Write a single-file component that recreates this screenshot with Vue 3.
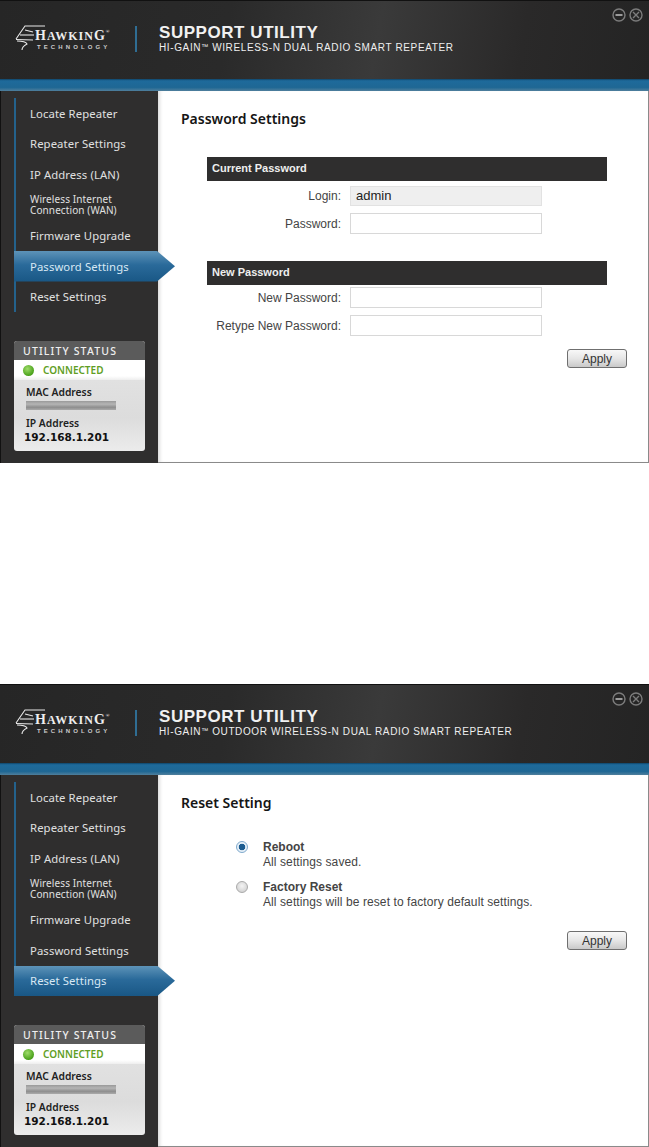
<script setup>
const navItems = [
  { key: 'locate', label: 'Locate Repeater' },
  { key: 'repeater', label: 'Repeater Settings' },
  { key: 'ip', label: 'IP Address (LAN)' },
  { key: 'wan', label: 'Wireless Internet Connection (WAN)', small: true },
  { key: 'firmware', label: 'Firmware Upgrade' },
  { key: 'password', label: 'Password Settings' },
  { key: 'reset', label: 'Reset Settings' }
]
const windows = [
  { id: 1, active: 'password', subtitle: 'WIRELESS-N DUAL RADIO SMART REPEATER' },
  { id: 2, active: 'reset', subtitle: 'OUTDOOR WIRELESS-N DUAL RADIO SMART REPEATER' }
]
</script>

<template>
  <div class="page">
    <section v-for="w in windows" :key="w.id" class="window">
      <header class="head">
        <div class="logo">
          <svg class="bird" width="30" height="28" viewBox="0 0 30 28" fill="none" stroke="#e8e8e8" stroke-width="1.1">
            <path d="M30 2H10L1 15" />
            <path d="M10 6L18 8" />
            <path d="M5 11H19" />
            <path d="M1 15.5L18 16" />
            <path d="M2 17C6 17 11 18 12 20C10 21 7 23 7 26" />
          </svg>
          <div class="logo-text">
            <div class="brand"><span class="cap">H</span>AWKIN<span class="cap">G</span><sup>®</sup></div>
            <div class="tech">TECHNOLOGY</div>
          </div>
        </div>
        <div class="divider"></div>
        <div class="titles">
          <div class="title">SUPPORT UTILITY</div>
          <div class="subtitle">HI-GAIN<span class="tm">™</span> {{ w.subtitle }}</div>
        </div>
        <div class="win-btns">
          <svg width="32" height="16" viewBox="0 0 32 16" fill="none" stroke="#7c7c7c" stroke-width="1.4">
            <circle cx="7" cy="8" r="6" />
            <path d="M3.5 8H10.5" stroke-width="2" stroke="#9a9a9a" />
            <circle cx="24" cy="8" r="6" />
            <path d="M21 5L27 11M27 5L21 11" />
          </svg>
        </div>
      </header>
      <div class="stripe"></div>
      <div class="body">
        <aside class="side">
          <nav class="nav">
            <div
              v-for="n in navItems"
              :key="n.key"
              class="nav-item"
              :class="[n.small && 'nav-item--small', w.active === n.key && 'nav-item--active']"
            >
              <span>{{ n.label }}</span>
            </div>
          </nav>
          <div class="status">
            <div class="status-head">UTILITY STATUS</div>
            <div class="status-conn"><i class="led"></i>CONNECTED</div>
            <div class="status-body">
              <div class="status-label">MAC Address</div>
              <div class="mac-blur"></div>
              <div class="status-label status-label--ip">IP Address</div>
              <div class="ip">192.168.1.201</div>
            </div>
          </div>
        </aside>

        <main v-if="w.active === 'password'" class="panel">
          <h1 class="panel-title">Password Settings</h1>
          <div class="form">
            <div class="bar">Current Password</div>
            <div class="row row--login">
              <label>Login:</label>
              <input class="field field--ro" value="admin" readonly />
            </div>
            <div class="row">
              <label>Password:</label>
              <input class="field" type="password" />
            </div>
            <div class="bar bar--second">New Password</div>
            <div class="row row--new">
              <label>New Password:</label>
              <input class="field" type="password" />
            </div>
            <div class="row">
              <label>Retype New Password:</label>
              <input class="field" type="password" />
            </div>
          </div>
          <div class="actions actions--password"><button class="apply">Apply</button></div>
        </main>

        <main v-else class="panel">
          <h1 class="panel-title">Reset Setting</h1>
          <div class="options">
            <div class="option">
              <i class="radio radio--on"></i>
              <div>
                <div class="opt-name">Reboot</div>
                <div class="opt-desc">All settings saved.</div>
              </div>
            </div>
            <div class="option">
              <i class="radio"></i>
              <div>
                <div class="opt-name">Factory Reset</div>
                <div class="opt-desc">All settings will be reset to factory default settings.</div>
              </div>
            </div>
          </div>
          <div class="actions actions--reset"><button class="apply">Apply</button></div>
        </main>
      </div>
    </section>
  </div>
</template>

<style>
html, body { background: #fff; }
</style>

<style scoped>
.page {
  width: 649px;
  height: 1147px;
  overflow: hidden;
  font-family: "Liberation Sans", Arial, sans-serif;
}
.window {
  height: 463px;
  display: flex;
  flex-direction: column;
}
.window + .window {
  margin-top: 221px;
}
.head {
  height: 79px;
  display: flex;
  align-items: flex-start;
  padding-left: 15px;
  background: linear-gradient(100deg, #262626 0%, #2a2a2a 35%, #3a3a3a 58%, #2a2929 80%, #242424 100%);
  border-top: 1px solid #111;
  box-sizing: border-box;
}
.logo {
  display: flex;
  margin-top: 23px;
  width: 120px;
}
.bird { flex: none; }
.logo-text { margin-left: -10px; color: #eee; }
.brand {
  font-family: "Liberation Serif", serif;
  font-weight: 700;
  font-size: 12px;
  letter-spacing: 1px;
  line-height: 14px;
  margin-top: 5px;
  white-space: nowrap;
}
.cap { font-size: 14px; }
.brand sup { font-size: 5px; line-height: 0; vertical-align: 7px; letter-spacing: 0; }
.tech {
  font-size: 6px;
  font-weight: 700;
  letter-spacing: 3.1px;
  line-height: 6px;
  margin-top: 1px;
  margin-left: 2px;
  color: #ccc;
  white-space: nowrap;
}
.divider {
  width: 2px;
  height: 26px;
  margin-top: 25px;
  background: #2f6d93;
}
.titles { margin-left: 22px; margin-top: 23px; color: #f1f1f1; }
.title {
  font-weight: 700;
  font-size: 17px;
  line-height: 17px;
  letter-spacing: 0.55px;
  white-space: nowrap;
}
.subtitle {
  font-size: 10px;
  line-height: 12px;
  margin-top: 1px;
  letter-spacing: 0.62px;
  color: #efefef;
  white-space: nowrap;
}
.tm { font-size: 7px; vertical-align: 2px; line-height: 0; }
.win-btns {
  margin-left: auto;
  margin-right: 5px;
  margin-top: 6px;
  height: 16px;
}
.stripe {
  height: 12px;
  background: linear-gradient(#0f4468 0, #1e6a9b 15%, #1f6794 70%, #4f7f9c 100%);
}
.body {
  flex: 1;
  display: flex;
  min-height: 0;
}
.side {
  width: 158px;
  flex: none;
  background: #2f2e2e;
  border-left: 1px solid #111;
  box-sizing: border-box;
  padding-top: 7px;
}
.nav {
  margin-left: 13px;
  border-left: 2px solid #24628c;
  color: #e0e0e0;
  width: 144px;
}
.nav-item {
  height: 30.6px;
  display: flex;
  align-items: center;
  padding-left: 14px;
  font-family: "Noto Sans", sans-serif;
  font-size: 11.3px;
  letter-spacing: 0.1px;
  box-sizing: border-box;
  white-space: nowrap;
}
.nav-item--small {
  font-size: 10px;
  line-height: 11px;
  white-space: normal;
  width: 125px;
}
.nav-item--active {
  width: 161px;
  margin-left: -2px;
  padding-left: 16px;
  color: #d8e8f4;
  background: linear-gradient(#5d93b8, #2a6a9a 45%, #195785);
  clip-path: polygon(0 0, 143px 0, 161px 50%, 143px 100%, 0 100%);
}
.status {
  margin: 29px 0 0 13px;
  width: 131px;
  height: 110px;
  border-radius: 3px;
  overflow: hidden;
  background: linear-gradient(#e6e6e6, #dcdcdc 70%, #ececec);
  display: flex;
  flex-direction: column;
}
.status-head {
  height: 19px;
  line-height: 20px;
  background: #5b5b5b;
  color: #efefef;
  font-family: "Noto Sans", sans-serif;
  font-weight: 500;
  font-size: 10.5px;
  letter-spacing: 1.15px;
  padding-left: 9px;
  white-space: nowrap;
}
.status-conn {
  height: 20px;
  background: linear-gradient(#fff 80%, #eee);
  display: flex;
  align-items: center;
  color: #5f9e24;
  font-family: "Noto Sans", sans-serif;
  font-weight: 600;
  font-size: 10px;
  padding-left: 9px;
}
.led {
  width: 11px;
  height: 11px;
  border-radius: 50%;
  margin-right: 9px;
  background: radial-gradient(circle at 40% 35%, #9fdc6a, #4fa51f 65%, #3b8a12);
}
.status-body { padding: 6px 0 0 12px; color: #222; }
.status-label {
  font-family: "Noto Sans", sans-serif;
  font-weight: 600;
  font-size: 10.3px;
  line-height: 13px;
}
.status-label--ip { margin-top: 7px; }
.mac-blur {
  width: 90px;
  height: 9px;
  margin-top: 2px;
  background: linear-gradient(#999, #b5b5b5 35%, #8e8e8e 70%, #aaa);
}
.ip {
  margin-left: -2px;
  font-family: "DejaVu Sans", sans-serif;
  font-weight: 700;
  font-size: 10.5px;
  line-height: 14px;
  color: #111;
}
.panel {
  flex: 1;
  background: #fff;
  border-right: 1px solid #8a8a8a;
  border-bottom: 1px solid #8a8a8a;
  box-shadow: inset 4px 0 4px -3px #ccc;
  padding: 0 21px 0 23px;
  box-sizing: border-box;
  min-width: 0;
}
.panel-title {
  margin: 18px 0 0;
  font-family: "Noto Sans", sans-serif;
  font-weight: 600;
  font-size: 14px;
  line-height: 19px;
  color: #151515;
}
.form {
  width: 400px;
  margin: 29px 0 0 26px;
}
.bar {
  height: 24px;
  line-height: 23px;
  background: #2f2e2e;
  color: #eee;
  font-weight: 700;
  font-size: 11px;
  padding-left: 5px;
}
.bar--second { margin-top: 27px; }
.row {
  display: flex;
  align-items: center;
  height: 21px;
  margin-top: 7px;
}
.row--login { margin-top: 5px; height: 20px; }
.row--login .field { padding-bottom: 2px; }
.row--new { margin-top: 2px; }
.row label {
  width: 134px;
  text-align: right;
  font-size: 12px;
  color: #444;
  white-space: nowrap;
  flex: none;
}
.field {
  width: 192px;
  height: 100%;
  margin-left: 9px;
  box-sizing: border-box;
  border: 1px solid #d8d8d8;
  background: #fff;
  padding: 0 5px;
  font-family: "Liberation Sans", sans-serif;
  font-size: 13px;
  color: #222;
  outline: none;
}
.field--ro { background: #efefef; border-color: #e2e2e2; }
.actions { display: flex; justify-content: flex-end; }
.actions--password { margin-top: 13px; }
.actions--reset { margin-top: 11px; }
.apply {
  width: 60px;
  height: 19px;
  padding: 0;
  border: 1px solid #6f6f6f;
  border-radius: 3px;
  background: linear-gradient(#f8f8f8, #e6e6e6 50%, #c9c9c9);
  font-family: "Liberation Sans", sans-serif;
  font-size: 12px;
  color: #333;
}
.options { margin: 28px 0 0 55px; }
.option {
  display: flex;
  height: 40px;
  color: #444;
}
.radio {
  flex: none;
  width: 10px;
  height: 10px;
  margin: 1px 15px 0 0;
  border-radius: 50%;
  border: 1px solid #aaa;
  background: radial-gradient(circle at 50% 40%, #f4f4f4, #c9c9c9);
}
.radio--on {
  border-color: #7fa9cc;
  background: radial-gradient(circle, #1c5c90 0 3px, #e6f0f8 3.6px);
}
.opt-name {
  font-weight: 700;
  font-size: 12px;
  line-height: 15px;
}
.opt-desc {
  font-size: 12px;
  line-height: 15px;
  letter-spacing: 0.09px;
}
</style>
